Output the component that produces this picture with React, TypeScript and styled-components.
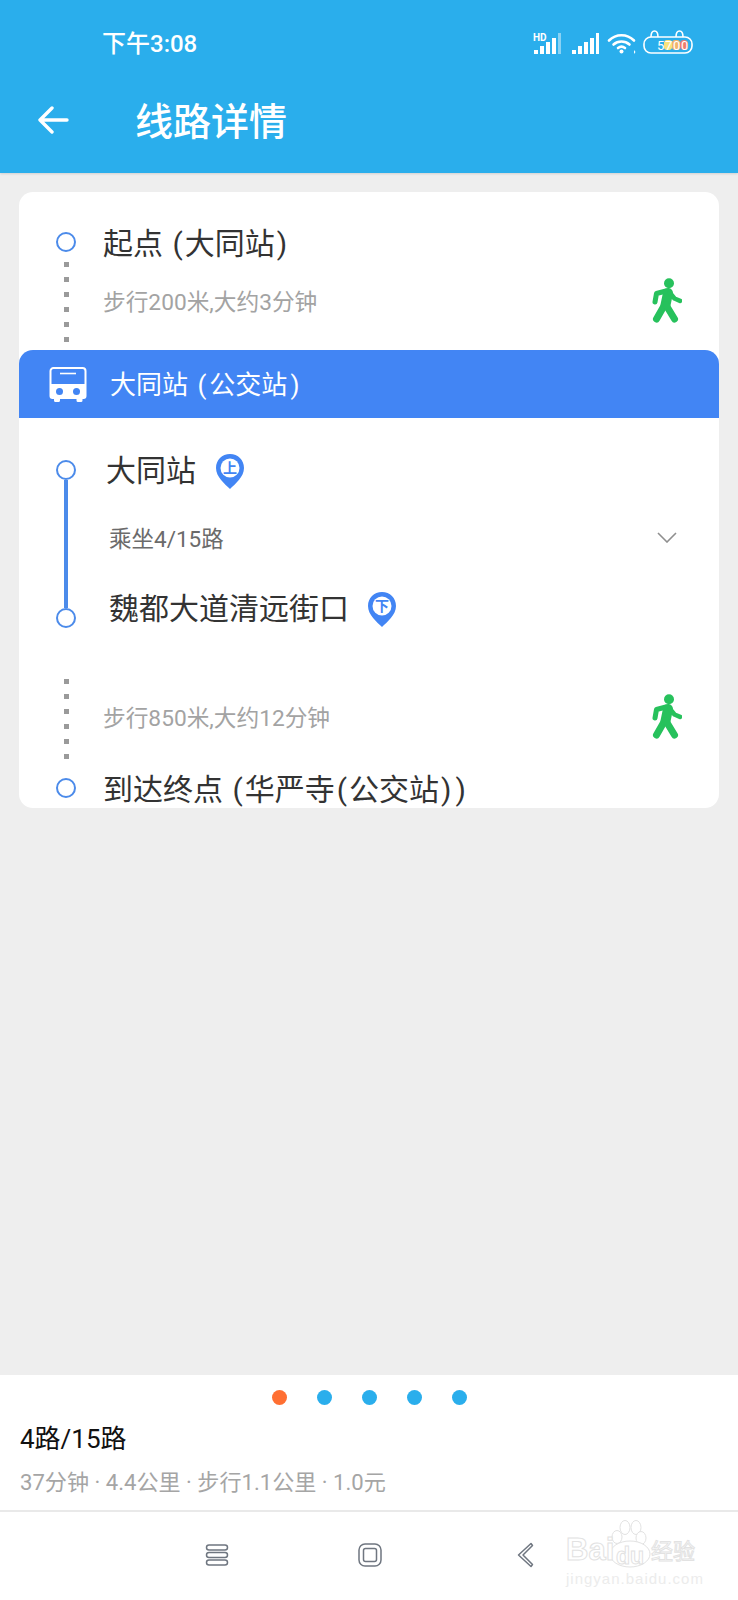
import React from "react";
import styled, { createGlobalStyle } from "styled-components";

const FONT = `Roboto, "Noto Sans CJK SC", sans-serif`;

const Global = createGlobalStyle`
  html, body { margin: 0; padding: 0; background: #eeeeee; }
  body { font-family: ${FONT}; }
  * { box-sizing: border-box; }
`;

const Page = styled.div`
  width: 738px;
  height: 1600px;
  display: flex;
  flex-direction: column;
  background: #eeeeee;
  overflow: hidden;
`;

const Header = styled.header`
  height: 173px;
  flex: none;
  background: #2aaeec;
  color: #fff;
  box-shadow: 0 1px 2px rgba(0, 0, 0, 0.12);
  display: flex;
  flex-direction: column;
`;

const StatusBar = styled.div`
  height: 90px;
  display: flex;
  align-items: center;
  justify-content: space-between;
  padding: 0 45px 2px 102px;
`;

const Time = styled.span`
  font-size: 24px;
  font-weight: 500;
  line-height: 1;
`;

const StatusIcons = styled.div`
  display: flex;
  align-items: flex-end;
  gap: 7px;
  margin-top: -6px;
`;

const AppBar = styled.div`
  height: 60px;
  display: flex;
  align-items: center;
  padding-left: 38px;
`;

const Title = styled.h1`
  margin: 4px 0 0 65px;
  font-size: 38px;
  font-weight: 500;
  line-height: 60px;
`;

const Main = styled.main`
  flex: 1;
  padding: 19px 19px 0;
`;

const Card = styled.section`
  width: 700px;
  height: 616px;
  background: #fff;
  border-radius: 14px;
  overflow: hidden;
  display: flex;
  flex-direction: column;
`;

const Row = styled.div<{ $height: number; $top?: number }>`
  height: ${(p) => p.$height}px;
  margin-top: ${(p) => p.$top ?? 0}px;
  padding-left: 37px;
  display: flex;
  align-items: center;
  gap: 27px;
  flex: none;
`;

const Circle = styled.span`
  width: 20px;
  height: 20px;
  flex: none;
  background: #fff;
  border: 2px solid #4c8bea;
  border-radius: 50%;
`;

const StopName = styled.span<{ $down?: boolean }>`
  font-size: 30px;
  line-height: 40px;
  color: #333;
  white-space: nowrap;
  padding-top: ${(p) => (p.$down ? 4 : 0)}px;
`;

const Paren = styled.span<{ $wide?: boolean }>`
  margin: 0 ${(p) => (p.$wide ? 3 : 2)}px;
`;

const Dots = styled.div`
  width: 20px;
  flex: none;
  align-self: flex-start;
  display: flex;
  flex-direction: column;
  align-items: center;
  gap: 10px;
`;

const Dot = styled.i`
  display: block;
  width: 5px;
  height: 5px;
  background: #9a9a9a;
`;

const WalkText = styled.span`
  flex: 1;
  font-size: 22.7px;
  line-height: 30px;
  color: #a3a3a3;
  white-space: nowrap;
  padding-bottom: 6px;
`;

const WalkIcon = styled.svg<{ $top: number }>`
  width: 30px;
  height: 45px;
  flex: none;
  align-self: flex-start;
  margin: ${(p) => p.$top}px 37px 0 0;
`;

const BusBar = styled.div`
  height: 68px;
  flex: none;
  background: #4285f4;
  border-radius: 14px 14px 0 0;
  display: flex;
  align-items: center;
  padding-left: 30px;
  gap: 23px;
  color: #fff;
  font-size: 26px;
`;

const BusName = styled.span`
  padding-bottom: 4px;
`;

const Ride = styled.div`
  margin: 33px 0 0;
  padding-left: 37px;
  display: flex;
  flex: none;
`;

const RideRail = styled.div`
  width: 20px;
  height: 168px;
  margin-top: 9px;
  flex: none;
  display: flex;
  flex-direction: column;
  align-items: center;
`;

const RideLine = styled.span`
  width: 4px;
  flex: 1;
  background: #4c8bea;
`;

const RideBody = styled.div`
  flex: 1;
  display: flex;
  flex-direction: column;
  padding-left: 30px;
`;

const StopRow = styled.div<{ $height: number; $shift?: number; $gap: number }>`
  height: ${(p) => p.$height}px;
  display: flex;
  align-items: center;
  gap: ${(p) => p.$gap}px;
  margin-left: ${(p) => p.$shift ?? 0}px;
`;

const InfoRow = styled.div`
  height: 96px;
  display: flex;
  align-items: center;
  margin-left: 3px;
  padding-bottom: 4px;
`;

const RideInfo = styled.span`
  flex: 1;
  font-size: 22.5px;
  color: #6b6b6b;
`;

const Chevron = styled.svg`
  width: 20px;
  height: 11px;
  margin-right: 42px;
`;

const Pin = styled.svg`
  width: 28px;
  height: 35px;
  flex: none;
`;

const Footer = styled.footer`
  height: 225px;
  flex: none;
  background: #fff;
  display: flex;
  flex-direction: column;
`;

const Pager = styled.div`
  height: 44px;
  padding-top: 15px;
  display: flex;
  justify-content: center;
  gap: 30px;
`;

const PagerDot = styled.span<{ $active?: boolean }>`
  width: 15px;
  height: 15px;
  border-radius: 50%;
  background: ${(p) => (p.$active ? "#ff6f32" : "#2aaeec")};
`;

const Route = styled.div`
  padding-left: 20px;
  font-size: 26px;
  line-height: 40px;
  color: #111;
`;

const Summary = styled.div`
  padding: 3px 0 0 20px;
  font-size: 22.1px;
  line-height: 40px;
  color: #a5a5a5;
`;

const NavBar = styled.nav`
  position: relative;
  margin-top: 8px;
  flex: 1;
  border-top: 2px solid #e9e9e9;
  display: flex;
  align-items: center;
  padding: 0 0 3px 205px;
`;

const NavIcon = styled.svg<{ $gap: number }>`
  width: 24px;
  height: 26px;
  flex: none;
  margin-right: ${(p) => p.$gap}px;
`;

const Watermark = styled.div`
  position: absolute;
  left: 566px;
  top: 8px;
  width: 140px;
  height: 68px;
`;

const WatermarkBai = styled.span`
  position: absolute;
  left: 0;
  top: 15px;
  font: 700 31px/30px "Liberation Sans", sans-serif;
  color: #fff;
  -webkit-text-stroke: 1px #e2e2e2;
`;

const WatermarkDu = styled.span`
  position: absolute;
  left: 50px;
  top: 25px;
  font: 700 23px/22px "Liberation Sans", sans-serif;
  color: #fff;
  -webkit-text-stroke: 1px #e2e2e2;
`;

const WatermarkCn = styled.span`
  position: absolute;
  left: 85px;
  top: 20px;
  font-size: 22px;
  line-height: 24px;
  color: #fff;
  -webkit-text-stroke: 1px #e2e2e2;
  white-space: nowrap;
`;

const WatermarkUrl = styled.span`
  position: absolute;
  left: 0;
  top: 50px;
  font: 15px/18px "Liberation Sans", sans-serif;
  letter-spacing: 1px;
  color: #ececec;
  white-space: nowrap;
`;

const WatermarkPaw = styled.svg`
  position: absolute;
  left: 43px;
  top: 0;
  width: 42px;
  height: 48px;
`;

const Signal = ({ hd }: { hd?: boolean }) => (
  <svg width={hd ? 31 : 28} height="21" viewBox={hd ? "0 0 31 21" : "0 0 28 21"}>
    {hd && (
      <text x="0" y="8" fontSize="10" fontWeight="700" fill="#fff" fontFamily="Roboto, sans-serif">
        HD
      </text>
    )}
    <rect x="1" y="17" width="4" height="4" fill="#fff" />
    <rect x="7" y="13" width="4" height="8" fill="#fff" />
    <rect x="13" y="9" width="4" height="12" fill="#fff" />
    <rect x="19" y="5" width="4" height="16" fill="#fff" />
    <rect x="25" y="0" width="3" height="21" fill="#fff" opacity={hd ? 0.45 : 1} />
  </svg>
);

const Wifi = () => (
  <svg width="30" height="21" viewBox="0 0 30 21" fill="none" stroke="#fff" strokeWidth="2.6" strokeLinecap="round">
    <path d="M3 7.500C10 .5 21 .5 28 7.500" />
    <path d="M7.500 11.500c4.500-4 11.500-4 16 0" />
    <path d="M12 15c2-1.600 5-1.600 7 0" />
    <circle cx="15.500" cy="18.500" r="2" fill="#fff" stroke="none" />
    <path d="M28 17v4l1.500-2z" fill="#fff" stroke="none" />
  </svg>
);

const Battery = () => (
  <svg width="50" height="25" viewBox="0 0 50 25" fill="none">
    <path d="M8 8c0-8 7-8 7 0M33 8c0-8 7-8 7 0" stroke="#fff" strokeWidth="1.600" />
    <rect x="1" y="8" width="48" height="16" rx="7" stroke="#fff" strokeWidth="1.600" />
    <rect x="21" y="11" width="8" height="10" rx="3" fill="#f8e27c" />
    <rect x="29" y="11" width="8" height="10" rx="3" fill="#f2b46c" />
    <rect x="37" y="11" width="8" height="10" rx="4" fill="#ee7d6e" />
    <text x="14" y="20.500" fontSize="13" fontFamily="Roboto, sans-serif" fill="#fff">5</text>
    <text x="22" y="20.500" fontSize="13" fontFamily="Roboto, sans-serif" fill="#fff">7</text>
    <text x="30" y="20.500" fontSize="13" fontFamily="Roboto, sans-serif" fill="#fff">0</text>
    <text x="38" y="20.500" fontSize="13" fontFamily="Roboto, sans-serif" fill="#fff">0</text>
  </svg>
);

const BackArrow = () => (
  <svg width="32" height="30" viewBox="0 0 32 30" fill="none" stroke="#fff" strokeWidth="3.400" strokeLinecap="round" strokeLinejoin="round">
    <path d="M2 15h27M14 3 2 15l12 12" />
  </svg>
);

const Walker = ({ top }: { top: number }) => (
  <WalkIcon $top={top} viewBox="0 0 30 45" fill="none" stroke="#27c15c" strokeLinecap="round" strokeLinejoin="round">
    <circle cx="17" cy="5.200" r="5" fill="#27c15c" stroke="none" />
    <path d="M16 15 13.500 27" strokeWidth="10" />
    <path d="M14 13 4.500 15.500 3 24" strokeWidth="5" />
    <path d="M18 15l4.500 5.500 5.500 2.400" strokeWidth="4.600" />
    <path d="M12.500 27 4.500 41" strokeWidth="7" />
    <path d="M14 27 22.500 41" strokeWidth="7" />
  </WalkIcon>
);

const BusIcon = () => (
  <svg width="38" height="35" viewBox="0 0 38 35" fill="none">
    <path d="M1.500 17V4a3 3 0 0 1 3-3h29a3 3 0 0 1 3 3v13" stroke="#fff" strokeWidth="2" />
    <path d="M11 6.500h16" stroke="#fff" strokeWidth="1.600" />
    <path d="M.5 17h37v12a3 3 0 0 1-3 3h-1v1.500a1.500 1.500 0 0 1-1.500 1.500h-3a1.500 1.500 0 0 1-1.500-1.500V32H11v1.500A1.500 1.500 0 0 1 9.500 35h-3A1.500 1.500 0 0 1 5 33.500V32H3.500a3 3 0 0 1-3-3z" fill="#fff" />
    <circle cx="10.500" cy="24.500" r="3.500" fill="#4285f4" />
    <circle cx="27.500" cy="24.500" r="3.500" fill="#4285f4" />
  </svg>
);

const StopPin = ({ label }: { label: string }) => (
  <Pin viewBox="0 0 28 35">
    <path d="M14 0C6 0 0 6 0 14c0 9 9 16 14 21 5-5 14-12 14-21C28 6 22 0 14 0z" fill="#4285f4" />
    <circle cx="14" cy="14" r="9.500" fill="#fff" />
    <text x="14" y="19" fontSize="14" fontWeight="700" textAnchor="middle" fill="#4285f4" fontFamily='"Noto Sans CJK SC", sans-serif'>
      {label}
    </text>
  </Pin>
);

const WalkDots = () => (
  <Dots>
    {[0, 1, 2, 3, 4, 5].map((i) => (
      <Dot key={i} />
    ))}
  </Dots>
);

export default function App() {
  return (
    <Page>
      <Global />
      <Header>
        <StatusBar>
          <Time>下午3:08</Time>
          <StatusIcons>
            <Signal hd />
            <Signal />
            <Wifi />
            <Battery />
          </StatusIcons>
        </StatusBar>
        <AppBar>
          <BackArrow />
          <Title>线路详情</Title>
        </AppBar>
      </Header>
      <Main>
        <Card>
          <Row $height={40} $top={30}>
            <Circle />
            <StopName $down>
              起点 <Paren>(</Paren>大同站<Paren>)</Paren>
            </StopName>
          </Row>
          <Row $height={88}>
            <WalkDots />
            <WalkText>步行200米,大约3分钟</WalkText>
            <Walker top={16} />
          </Row>
          <BusBar>
            <BusIcon />
            <BusName>
              大同站 <Paren $wide>(</Paren>公交站<Paren $wide>)</Paren>
            </BusName>
          </BusBar>
          <Ride>
            <RideRail>
              <Circle />
              <RideLine />
              <Circle />
            </RideRail>
            <RideBody>
              <StopRow $height={40} $gap={20}>
                <StopName>大同站</StopName>
                <StopPin label="上" />
              </StopRow>
              <InfoRow>
                <RideInfo>乘坐4/15路</RideInfo>
                <Chevron viewBox="0 0 20 11" fill="none" stroke="#8f8f8f" strokeWidth="1.600">
                  <path d="M1 1l9 9 9-9" />
                </Chevron>
              </InfoRow>
              <StopRow $height={44} $shift={3} $gap={19}>
                <StopName>魏都大道清远街口</StopName>
                <StopPin label="下" />
              </StopRow>
            </RideBody>
          </Ride>
          <Row $height={85} $top={48}>
            <WalkDots />
            <WalkText>步行850米,大约12分钟</WalkText>
            <Walker top={15} />
          </Row>
          <Row $height={40} $top={4}>
            <Circle />
            <StopName $down>
              到达终点 <Paren>(</Paren>华严寺<Paren>(</Paren>公交站<Paren>)</Paren>
              <Paren>)</Paren>
            </StopName>
          </Row>
        </Card>
      </Main>
      <Footer>
        <Pager>
          <PagerDot $active />
          <PagerDot />
          <PagerDot />
          <PagerDot />
          <PagerDot />
        </Pager>
        <Route>4路/15路</Route>
        <Summary>37分钟 · 4.4公里 · 步行1.1公里 · 1.0元</Summary>
        <NavBar>
          <NavIcon $gap={129} viewBox="0 0 24 26" fill="none" stroke="#6f7680" strokeWidth="1.500">
            <rect x="1.500" y="3" width="21" height="5" rx="2.500" />
            <rect x="1.500" y="10.500" width="21" height="5" rx="2.500" />
            <rect x="1.500" y="18" width="21" height="5" rx="2.500" />
          </NavIcon>
          <NavIcon $gap={135} viewBox="0 0 24 26" fill="none" stroke="#6f7680" strokeWidth="1.500">
            <rect x="1" y="2" width="22" height="22" rx="6" />
            <rect x="5.500" y="6.500" width="13" height="13" rx="2" />
          </NavIcon>
          <NavIcon $gap={0} viewBox="0 0 24 26" fill="none" stroke="#6f7680" strokeWidth="1.500" strokeLinejoin="round">
            <path d="M14 1.500 15.500 3.500 6 13 15.500 22.500 14 24.500 1.500 13z" />
          </NavIcon>
          <Watermark>
            <WatermarkPaw viewBox="0 0 42 48" fill="#fff" stroke="#e2e2e2" strokeWidth="1">
              <ellipse cx="8" cy="17" rx="5" ry="6.500" />
              <ellipse cx="16" cy="7.500" rx="5" ry="7" />
              <ellipse cx="27" cy="7.500" rx="5" ry="7" />
              <ellipse cx="32" cy="18" rx="5" ry="6.500" />
              <ellipse cx="21" cy="34" rx="20" ry="13" />
            </WatermarkPaw>
            <WatermarkBai>Bai</WatermarkBai>
            <WatermarkDu>du</WatermarkDu>
            <WatermarkCn>经验</WatermarkCn>
            <WatermarkUrl>jingyan.baidu.com</WatermarkUrl>
          </Watermark>
        </NavBar>
      </Footer>
    </Page>
  );
}
